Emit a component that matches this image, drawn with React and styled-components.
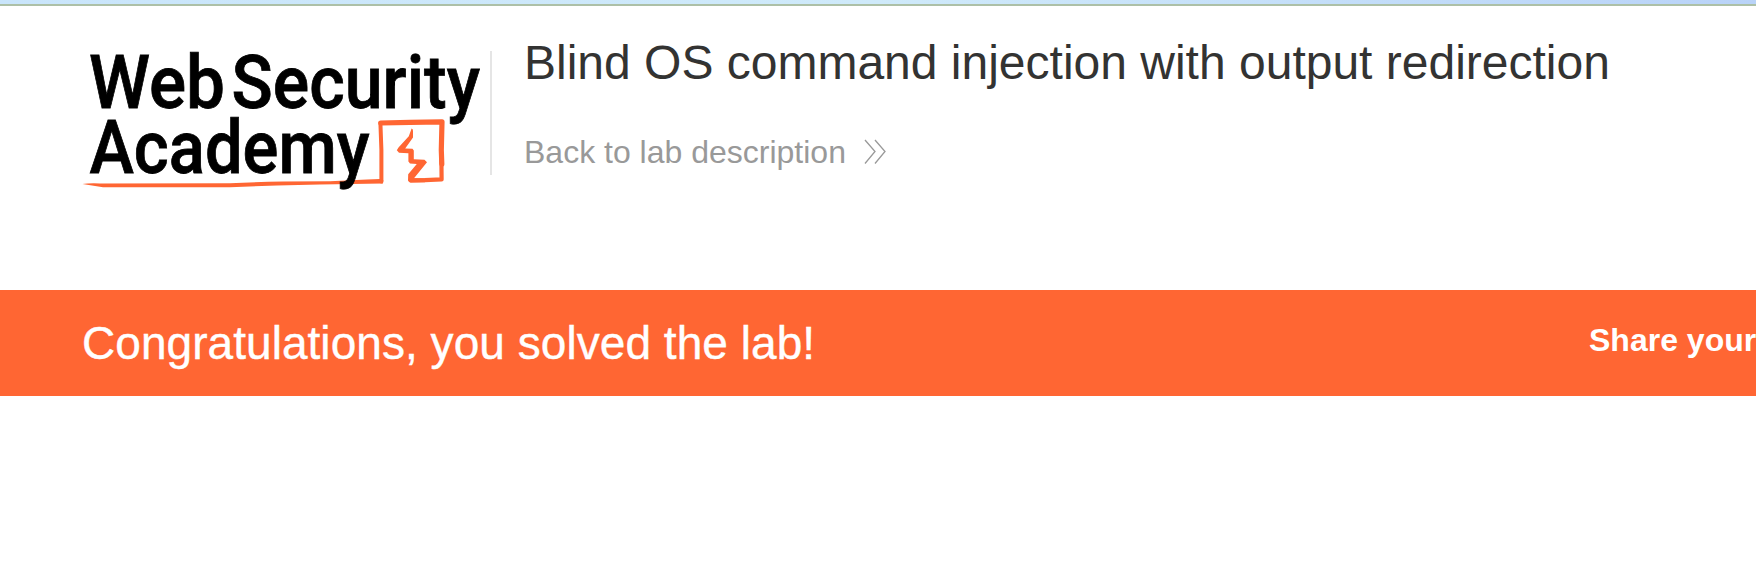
import React from "react";
import styled, { createGlobalStyle } from "styled-components";

const GlobalStyle = createGlobalStyle`
  body {
    margin: 0;
    background: #fff;
    font-family: "Liberation Sans", Arial, sans-serif;
    overflow: hidden;
  }
`;

const Page = styled.div`
  width: 100%;
  height: 586px;
  overflow: hidden;
`;

const TopStrip = styled.div`
  height: 4px;
  background: linear-gradient(90deg, #c9e5fb, #cfeafa 50%, #b9d3f8);
  border-bottom: 2px solid #adc0a7;
`;

const Header = styled.header`
  display: flex;
  align-items: flex-start;
  height: 239px;
  padding: 45px 0 0 82px;
  box-sizing: content-box;
`;

const Logo = styled.svg`
  display: block;
  flex: none;
  overflow: visible;
`;

const LogoWord = styled.text`
  font-family: Roboto, sans-serif;
  font-size: 75px;
  font-weight: 500;
  fill: #000;
  stroke: #000;
  stroke-width: 0.8px;
`;

const TitleBlock = styled.div`
  display: flex;
  flex-direction: column;
  align-items: flex-start;
  height: 124px;
  margin-left: 8px;
  padding-left: 32px;
  border-left: 2px solid #e5e5e5;
  white-space: nowrap;
`;

const Title = styled.h2`
  margin: -16px 0 0;
  font-size: 48px;
  font-weight: 400;
  line-height: 56px;
  color: #333332;
`;

const BackLink = styled.a`
  display: flex;
  align-items: center;
  gap: 18px;
  margin-top: 43px;
  font-size: 32px;
  line-height: 36px;
  color: #999;
`;

const Banner = styled.section`
  display: flex;
  justify-content: space-between;
  height: 106px;
  padding-left: 82px;
  background: #ff6633;
  color: #fff;
  white-space: nowrap;
`;

const Message = styled.h4`
  margin: 0;
  padding-top: 26px;
  font-size: 46px;
  font-weight: 400;
  line-height: 54px;
  letter-spacing: 0.05px;
  -webkit-text-stroke: 0.4px #fff;
`;

const Share = styled.span`
  width: 167px;
  padding-top: 32px;
  overflow: hidden;
  font-size: 32px;
  font-weight: 700;
  line-height: 36px;
`;

function AcademyLogo() {
  return (
    <Logo width="400" height="142" viewBox="82 51 400 142">
      <path
        fill="#ff6633"
        d="M82.5 184 Q88 183 100 183.4 L230 183.3 Q255 182 283 181.5 L330 181.2 L367 179.4 L380 178.9 L383.3 180 L383 183.6 L320 184.6 L277 185.4 L230 187.2 L103 187.3 Z"
      />
      <g fill="none" stroke="#ff6633" strokeLinejoin="round" strokeLinecap="round">
        <path strokeWidth="4" d="M381.4 181.6 L381.4 150 L380.4 123" />
        <path strokeWidth="5.2" d="M380.8 123 L410 122.4 L442 121.8 L441.3 150 L441.8 164" />
        <path strokeWidth="4.2" d="M441.4 160 L441.6 179.4 L425 180.2 L410.5 180.4" />
      </g>
      <path
        fill="#ff6633"
        d="M411.6 128.4 Q413 128.6 413 131 L413 137.5 L405.2 148.4 L412.5 148.8 L413.8 150.5 L413.8 159.3 L424.5 159.7 L427 162.3 L414 178.2 L425 178.2 L425 182.3 L410.5 182.6 L408 180.5 L408.2 174.2 L416.8 164 L410 163.4 L408.4 161.5 L408.4 153.3 L399 152.8 L396.8 150.3 L398.5 147.5 L408.8 136.2 Z"
      />
      <LogoWord x="89" y="108" textLength="136" lengthAdjust="spacingAndGlyphs">Web</LogoWord>
      <LogoWord x="231.5" y="108" textLength="248.5" lengthAdjust="spacingAndGlyphs">Security</LogoWord>
      <LogoWord x="89.5" y="173" textLength="280" lengthAdjust="spacingAndGlyphs">Academy</LogoWord>
    </Logo>
  );
}

function DoubleChevron() {
  return (
    <svg width="24" height="26" viewBox="0 0 24 26" fill="none" stroke="#999" strokeWidth="1.3">
      <path d="M1 1 L11 12.5 L1 24.5 M11 1 L21 12.5 L11 24.5" />
    </svg>
  );
}

export default function App() {
  return (
    <Page>
      <GlobalStyle />
      <TopStrip />
      <Header>
        <AcademyLogo />
        <TitleBlock>
          <Title>Blind OS command injection with output redirection</Title>
          <BackLink>
            Back to lab description
            <DoubleChevron />
          </BackLink>
        </TitleBlock>
      </Header>
      <Banner>
        <Message>Congratulations, you solved the lab!</Message>
        <Share>Share your</Share>
      </Banner>
    </Page>
  );
}
